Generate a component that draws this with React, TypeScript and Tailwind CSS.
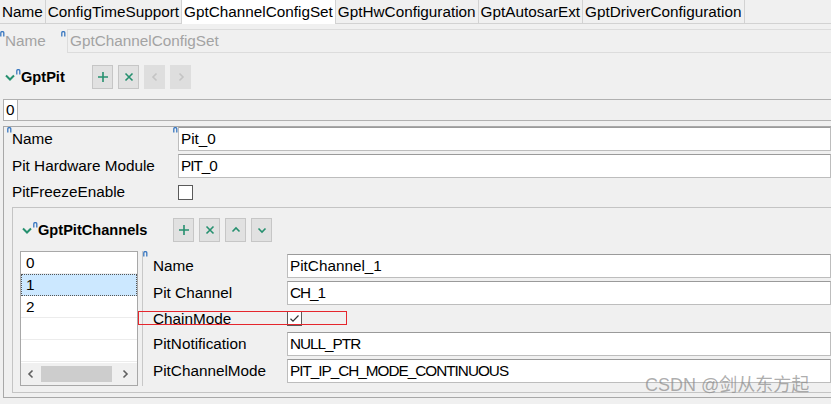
import type { ReactNode } from 'react'

const TEAL = '#26906f'

const TABS = [
  { label: 'Name' },
  { label: 'ConfigTimeSupport' },
  { label: 'GptChannelConfigSet', active: true },
  { label: 'GptHwConfiguration' },
  { label: 'GptAutosarExt' },
  { label: 'GptDriverConfiguration' },
]

// tiny blue "linked" marker shown at the corner of labels and fields
function Mark() {
  return (
    <svg width="5" height="6" viewBox="0 0 5 6" className="shrink-0">
      <path d="M0.8 5.5V1.8Q0.8 0.6 2.3 0.6Q3.8 0.6 3.8 1.8V5.5" fill="none" stroke="#3a78c0" strokeWidth="1.3" />
    </svg>
  )
}

function Chevron() {
  return (
    <svg width="10" height="7" viewBox="0 0 10 7" className="shrink-0">
      <path d="M1 1.5L5 5.5L9 1.5" fill="none" stroke={TEAL} strokeWidth="2" />
    </svg>
  )
}

type IconKind = 'plus' | 'x' | 'left' | 'right' | 'up' | 'down'

function BtnIcon({ kind, color }: { kind: IconKind; color: string }) {
  const d = {
    plus: 'M6 1V11M1 6H11',
    x: 'M2.5 2.5L9.5 9.5M9.5 2.5L2.5 9.5',
    left: 'M7.5 2.5L4 6L7.5 9.5',
    right: 'M4.5 2.5L8 6L4.5 9.5',
    up: 'M2.5 7.5L6 4L9.5 7.5',
    down: 'M2.5 4.5L6 8L9.5 4.5',
  }[kind]
  return (
    <svg width="12" height="12" viewBox="0 0 12 12">
      <path d={d} fill="none" stroke={color} strokeWidth="1.6" />
    </svg>
  )
}

function ToolBtn({ kind, disabled }: { kind: IconKind; disabled?: boolean }) {
  return (
    <div
      className={`flex h-[24px] w-[21px] items-center justify-center border ${
        disabled ? 'border-[#dedede] bg-[#dedede]' : 'border-[#c6c6c6] bg-[#e1e1e1]'
      }`}
    >
      <BtnIcon kind={kind} color={disabled ? '#c4c4c4' : TEAL} />
    </div>
  )
}

function Field({ value, caps }: { value: string; caps?: boolean }) {
  return (
    <div
      className={`flex h-[24px] flex-1 items-center border border-[#bdbdbd] border-t-[#9a9a9a] bg-white pl-[2px] whitespace-nowrap ${
        caps ? 'tracking-[-1px]' : ''
      }`}
    >
      {value}
    </div>
  )
}

function CheckBox({ checked }: { checked?: boolean }) {
  return (
    <div className="flex h-[15px] w-[15px] items-center justify-center border border-[#5a5a5a] bg-white">
      {checked && (
        <svg width="11" height="9" viewBox="0 0 11 9">
          <path d="M1.5 4.8L4 7.2L9.5 1.5" fill="none" stroke="#333" strokeWidth="1.2" />
        </svg>
      )}
    </div>
  )
}

function PanelRow({ label, mark, children }: { label: string; mark?: boolean; children: ReactNode }) {
  return (
    <div className="flex h-[24px] items-center">
      <div className={`flex h-full w-[169px] items-center ${mark ? 'pl-[3px]' : 'pl-[8px]'}`}>
        {mark && (
          <div className="self-start">
            <Mark />
          </div>
        )}
        <span>{label}</span>
      </div>
      <div className="flex h-full w-[5px] items-start">{mark && <Mark />}</div>
      {children}
    </div>
  )
}

function PropRow({ label, children, h = 'h-[24px]' }: { label: string; children: ReactNode; h?: string }) {
  return (
    <div className={`relative flex items-center ${h}`}>
      <div className="w-[144px] shrink-0 pl-[10px]">{label}</div>
      {children}
    </div>
  )
}

export default function App() {
  return (
    <div className="relative h-[404px] w-[831px] overflow-hidden bg-[#f0f0f0] font-['Liberation_Sans','Noto_Sans_CJK_SC',sans-serif] text-[15.3px] leading-none text-black">
      {/* editor tabs */}
      <div className="flex h-[24px] border-b border-[#d2d2d2]">
        {TABS.map((t) => (
          <div
            key={t.label}
            className={`flex items-center border-r border-[#d2d2d2] px-[2px] whitespace-nowrap ${
              t.active ? 'mb-[-1px] bg-white' : 'bg-[#f0f0f0]'
            }`}
          >
            {t.label}
          </div>
        ))}
      </div>

      {/* short name */}
      <div className="mt-[5px] flex h-[24px] items-center">
        <div className="flex h-full w-[61px] items-center text-[#a3a3a3]">
          <div className="self-start pt-[2px]">
            <Mark />
          </div>
          <span>Name</span>
        </div>
        <div className="flex h-full w-[6px] items-start pt-[2px]">
          <Mark />
        </div>
        <div className="flex h-full flex-1 items-center border border-r-0 border-[#dcdcdc] pl-[2px] text-[#a3a3a3]">
          GptChannelConfigSet
        </div>
      </div>

      {/* GptPit header */}
      <div className="mt-[12px] flex h-[24px] items-center">
        <div className="ml-[5px] flex w-[87px] items-center">
          <Chevron />
          <div className="-mt-[10px] ml-[1px]">
            <Mark />
          </div>
          <span className="text-[14.6px] font-bold">GptPit</span>
        </div>
        <div className="flex gap-[5px]">
          <ToolBtn kind="plus" />
          <ToolBtn kind="x" />
          <ToolBtn kind="left" disabled />
          <ToolBtn kind="right" disabled />
        </div>
      </div>

      {/* instance tabs */}
      <div className="mt-[10px] ml-[3px] flex h-[22px] border-y border-[#b0b0b0]">
        <div className="flex h-full items-center border-x border-[#b0b0b0] bg-white px-[2px]">0</div>
      </div>

      {/* instance panel */}
      <div className="mt-[5px] ml-[3px] flex h-[272px] flex-col border border-r-0 border-[#a8a8a8] pb-[4px]">
        <PanelRow label="Name" mark>
          <Field value="Pit_0" />
        </PanelRow>
        <div className="mt-[3px]">
          <PanelRow label="Pit Hardware Module">
            <Field value="PIT_0" caps />
          </PanelRow>
        </div>
        <div className="mt-[2px]">
          <PanelRow label="PitFreezeEnable">
            <CheckBox />
          </PanelRow>
        </div>

        {/* GptPitChannels group */}
        <div className="mt-[3px] ml-[8px] flex flex-1 flex-col border border-r-0 border-[#c4c4c4] pb-[6px]">
          <div className="mt-[10px] flex h-[24px] items-center">
            <div className="ml-[9px] flex w-[151px] items-center">
              <Chevron />
              <div className="-mt-[10px] ml-[1px]">
                <Mark />
              </div>
              <span className="text-[14.6px] font-bold">GptPitChannels</span>
            </div>
            <div className="flex gap-[5px]">
              <ToolBtn kind="plus" />
              <ToolBtn kind="x" />
              <ToolBtn kind="up" />
              <ToolBtn kind="down" />
            </div>
          </div>

          <div className="mt-[9px] flex flex-1">
            {/* channel list */}
            <div className="ml-[7px] flex w-[118px] flex-col border border-[#a8a8a8] bg-white">
              <div className="flex h-[22px] items-center border-b border-[#f0f0f0] pl-[5px]">0</div>
              <div className="flex h-[22px] items-center border border-dotted border-[#555] bg-[#cce8ff] pl-[4px]">1</div>
              <div className="flex h-[22px] items-center border-b border-[#ececec] pl-[5px]">2</div>
              <div className="h-[22px] border-b border-[#ececec]" />
              <div className="h-[22px] border-b border-[#ececec]" />
              <div className="mt-auto flex h-[22px] items-center bg-[#f0f0f0]">
                <div className="flex w-[20px] justify-center">
                  <BtnIcon kind="left" color="#606060" />
                </div>
                <div className="h-[16px] w-[71px] bg-[#cdcdcd]" />
                <div className="flex flex-1 justify-center">
                  <BtnIcon kind="right" color="#606060" />
                </div>
              </div>
            </div>

            {/* channel properties */}
            <div className="relative ml-[4px] flex flex-1 flex-col border-l border-[#c8c8c8] pt-[3px]">
              <div className="absolute top-[0px] left-[0px]">
                <Mark />
              </div>
              <PropRow label="Name">
                <Field value="PitChannel_1" />
              </PropRow>
              <div className="mt-[3px]">
                <PropRow label="Pit Channel">
                  <Field value="CH_1" caps />
                </PropRow>
              </div>
              <div className="mt-[3px]">
                <PropRow label="ChainMode" h="h-[21px]">
                  <CheckBox checked />
                  <div className="absolute top-[3px] left-[-5px] h-[14px] w-[209px] border-[1.5px] border-[#e5262d]" />
                </PropRow>
              </div>
              <div className="mt-[3px]">
                <PropRow label="PitNotification">
                  <Field value="NULL_PTR" caps />
                </PropRow>
              </div>
              <div className="mt-[3px]">
                <PropRow label="PitChannelMode">
                  <Field value="PIT_IP_CH_MODE_CONTINUOUS" caps />
                </PropRow>
              </div>
            </div>
          </div>
        </div>
      </div>

      {/* watermark */}
      <div className="absolute top-[376px] left-[645px] text-[18px] whitespace-nowrap text-[#8a8a8a]/70">
        CSDN @剑从东方起
      </div>
    </div>
  )
}
